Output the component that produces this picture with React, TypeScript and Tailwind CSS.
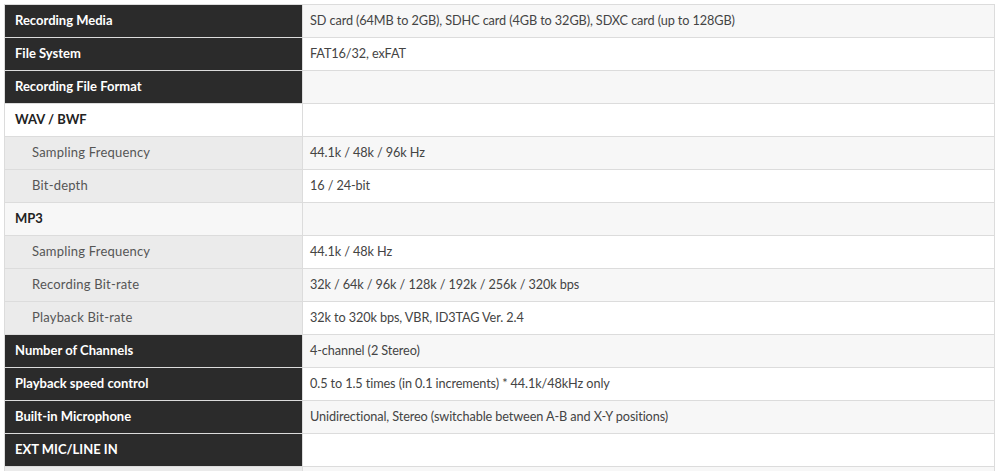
type Row = {
  label: string;
  value?: string;
  kind: "head" | "group" | "sub";
};

const rows: Row[] = [
  { label: "Recording Media", value: "SD card (64MB to 2GB), SDHC card (4GB to 32GB), SDXC card (up to 128GB)", kind: "head" },
  { label: "File System", value: "FAT16/32, exFAT", kind: "head" },
  { label: "Recording File Format", kind: "head" },
  { label: "WAV / BWF", kind: "group" },
  { label: "Sampling Frequency", value: "44.1k / 48k / 96k Hz", kind: "sub" },
  { label: "Bit-depth", value: "16 / 24-bit", kind: "sub" },
  { label: "MP3", kind: "group" },
  { label: "Sampling Frequency", value: "44.1k / 48k Hz", kind: "sub" },
  { label: "Recording Bit-rate", value: "32k / 64k / 96k / 128k / 192k / 256k / 320k bps", kind: "sub" },
  { label: "Playback Bit-rate", value: "32k to 320k bps, VBR, ID3TAG Ver. 2.4", kind: "sub" },
  { label: "Number of Channels", value: "4-channel (2 Stereo)", kind: "head" },
  { label: "Playback speed control", value: "0.5 to 1.5 times (in 0.1 increments) * 44.1k/48kHz only", kind: "head" },
  { label: "Built-in Microphone", value: "Unidirectional, Stereo (switchable between A-B and X-Y positions)", kind: "head" },
  { label: "EXT MIC/LINE IN", kind: "head" },
  { label: "", kind: "sub" },
];

export default function App() {
  return (
    <div className="h-[471px] overflow-hidden bg-white pl-1 pt-1 font-['Lato','Liberation_Sans',sans-serif] text-[13px]">
      <table className="w-[991px] table-fixed border-collapse">
        <colgroup>
          <col className="w-[298px]" />
          <col />
        </colgroup>
        <tbody>
          {rows.map((row, i) => {
            const striped = i % 2 === 0;
            const rowBg = striped ? "bg-[#f7f7f7]" : "bg-white";
            let leftCls = "";
            if (row.kind === "head") leftCls = "bg-[#2b2b2b] text-white font-bold pl-[10px]";
            else if (row.kind === "group") leftCls = `${rowBg} text-[#222] font-bold pl-[10px]`;
            else leftCls = "bg-[#ebebeb] text-[#555] pl-[27px] tracking-[0.2px]";
            return (
              <tr key={i} className="h-[33px]">
                <td className={`border border-[#dcdcdc] align-middle ${leftCls}`}>{row.label}</td>
                <td className={`border border-[#dcdcdc] align-middle pl-[7px] text-[12.7px] tracking-[-0.1px] text-[#444] ${rowBg}`}>{row.value}</td>
              </tr>
            );
          })}
        </tbody>
      </table>
    </div>
  );
}
